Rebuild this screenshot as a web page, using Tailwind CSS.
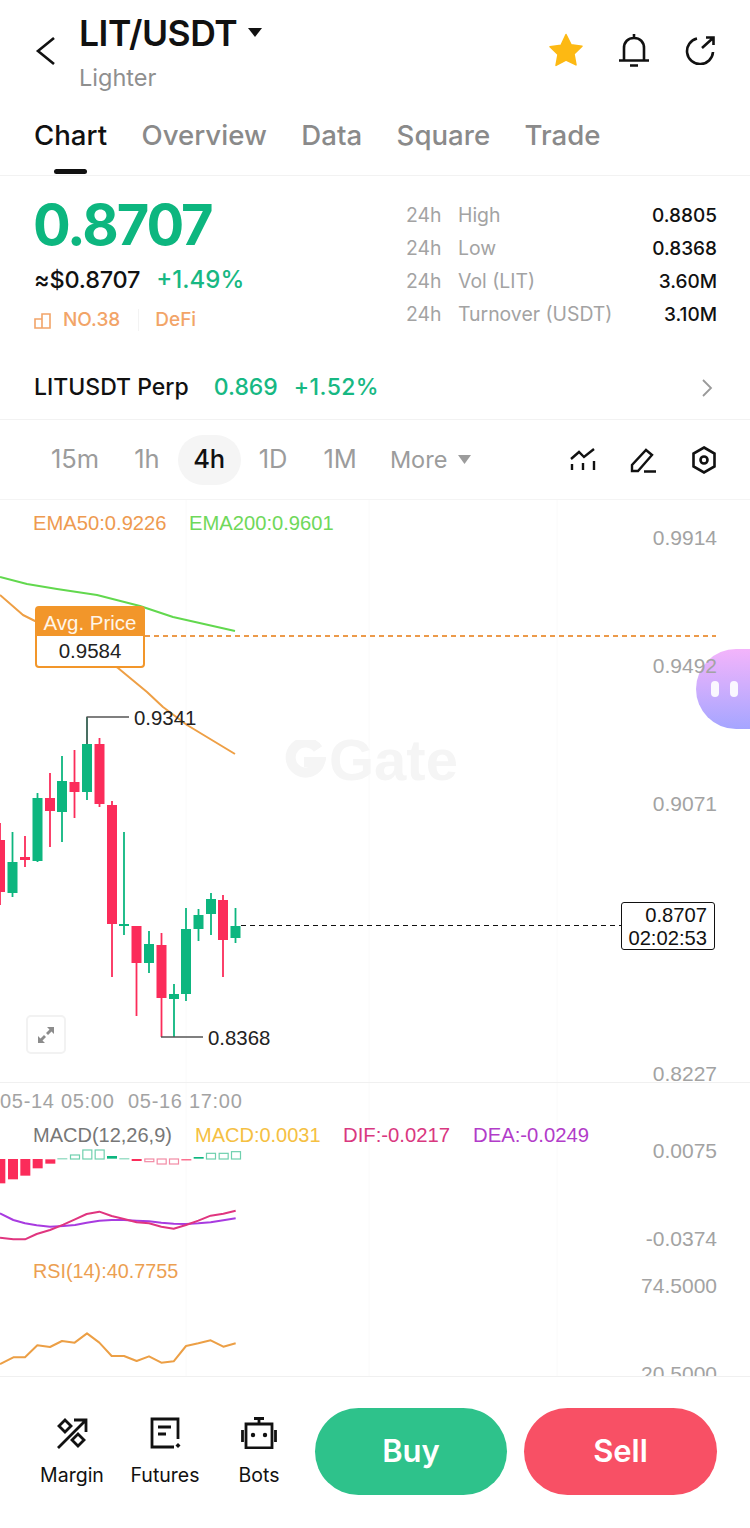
<!DOCTYPE html>
<html lang="en">
<head>
    <meta charset="UTF-8">
    <meta name="viewport" content="width=device-width, initial-scale=1.0">
    <title>LIT/USDT - Gate</title>
    <script src="https://cdn.jsdelivr.net/npm/@tailwindcss/browser@4"></script>
</head>
<body class="bg-white font-['Inter','Liberation_Sans',sans-serif] text-[#111]">
    <div class="w-[750px] h-[1528px] overflow-hidden flex flex-col">
        <!-- Header -->
        <header class="h-[112px] pl-[34px] pr-[34px] flex items-start">
            <svg class="mt-[37px] w-[24px] h-[28px] shrink-0" viewBox="0 0 24 28" fill="none" stroke="#111" stroke-width="2.6"><path d="M20 1 L4 14 L20 27"/></svg>
            <div class="ml-[21px] mt-[14px]">
                <div class="flex items-center h-[40px]">
                    <span class="text-[35.5px] font-semibold leading-[40px] tracking-[-0.5px]">LIT/USDT</span>
                    <svg class="ml-[11px] mb-[3px] w-[14px] h-[9px]" viewBox="0 0 14 9"><path d="M0 0H14L7 9Z" fill="#111"/></svg>
                </div>
                <div class="text-[23.5px] leading-[28px] mt-[10px] text-[#8f8f8f]">Lighter</div>
            </div>
            <div class="ml-auto mt-[33px] flex items-center gap-[34px]">
                <svg class="w-[36px] h-[34px]" viewBox="0 0 36 34"><path d="M18 1.5l5 10.2 11 1.5-8 7.7 2 11L18 27l-10 5.4 2-11-8-7.7 11-1.5z" fill="#fdb913" stroke="#fdb913" stroke-width="1.5" stroke-linejoin="round"/></svg>
                <svg class="w-[32px] h-[34px]" viewBox="0 0 32 34" fill="none" stroke="#111" stroke-width="2.6"><path d="M16 1v4M6 27V15c0-6 4-10 10-10s10 4 10 10v12M1 27.500h30M12 32.500h8"/></svg>
                <svg class="w-[32px] h-[30px]" viewBox="0 0 32 30" fill="none" stroke="#111" stroke-width="2.6"><path d="M13 3.500A13 13 0 1 0 29 17M18 13L29 3M22 2.500h7.500V10"/></svg>
            </div>
        </header>

        <!-- Tabs -->
        <nav class="h-[64px] pl-[34px] flex gap-[34.5px] border-b border-[#f2f2f2] relative">
            <a class="text-[27.6px] font-medium leading-[46px] text-[#111]">Chart</a>
            <a class="text-[27.6px] font-medium leading-[46px] text-[#8a8a8a]">Overview</a>
            <a class="text-[27.6px] font-medium leading-[46px] text-[#8a8a8a]">Data</a>
            <a class="text-[27.6px] font-medium leading-[46px] text-[#8a8a8a]">Square</a>
            <a class="text-[27.6px] font-medium leading-[46px] text-[#8a8a8a]">Trade</a>
            <span class="absolute left-[54px] top-[57px] w-[33px] h-[5px] rounded-full bg-[#111]"></span>
        </nav>

        <!-- Price block -->
        <section class="h-[168px] pl-[34px] pr-[33px] flex justify-between">
            <div>
                <div class="text-[56px] font-bold leading-[60px] mt-[19px] -ml-[1px] text-[#0db67f] tracking-[-2px]">0.8707</div>
                <div class="flex items-center mt-[9px] h-[32px]">
                    <span class="text-[23.5px] font-medium tracking-[-0.2px]">≈$0.8707</span>
                    <span class="text-[24px] ml-[16px] font-medium text-[#17b883]">+1.49%</span>
                </div>
                <div class="flex items-center h-[24px] mt-[12px] text-[19px] font-medium text-[#f2a468]">
                    <svg class="w-[17px] h-[17px] mr-[12px]" viewBox="0 0 17 17" fill="none" stroke="#f2a468" stroke-width="1.600"><path d="M1 7h7v9H1zM8 2h8v14H8z"/></svg>
                    <span>NO.38</span>
                    <span class="w-px h-[22px] bg-[#f3f3f3] ml-[18px] mr-[16px]"></span>
                    <span>DeFi</span>
                </div>
            </div>
            <dl class="mt-[23px] w-[311px] text-[19.4px] leading-[33px]">
                <div class="flex"><span class="w-[52px] text-[#a3a3a3]">24h</span><span class="text-[#a3a3a3]">High</span><span class="ml-auto text-[19px] font-medium">0.8805</span></div>
                <div class="flex"><span class="w-[52px] text-[#a3a3a3]">24h</span><span class="text-[#a3a3a3]">Low</span><span class="ml-auto text-[19px] font-medium">0.8368</span></div>
                <div class="flex"><span class="w-[52px] text-[#a3a3a3]">24h</span><span class="text-[#a3a3a3]">Vol (LIT)</span><span class="ml-auto text-[19px] font-medium">3.60M</span></div>
                <div class="flex"><span class="w-[52px] text-[#a3a3a3]">24h</span><span class="text-[#a3a3a3]">Turnover (USDT)</span><span class="ml-auto text-[19px] font-medium">3.10M</span></div>
            </dl>
        </section>

        <!-- Perp row -->
        <section class="h-[76px] pl-[34px] pr-[37px] pt-[12px] flex items-center border-b border-[#f2f2f2] text-[23px] font-medium">
            <span>LITUSDT Perp</span>
            <span class="ml-[25px] text-[#17b883]">0.869</span>
            <span class="ml-[16px] text-[#17b883] tracking-[0.4px]">+1.52%</span>
            <svg class="ml-auto w-[12px] h-[18px]" viewBox="0 0 12 18" fill="none" stroke="#9a9a9a" stroke-width="1.800"><path d="M2 1l8 8-8 8"/></svg>
        </section>

        <!-- Timeframes -->
        <section class="h-[80px] shrink-0 pl-[51px] pr-[33px] flex items-center border-b border-[#f4f4f4] text-[25.5px] text-[#9c9c9c]">
            <span>15m</span>
            <span class="ml-[35px]">1h</span>
            <span class="ml-[18px] w-[63px] h-[50px] rounded-full bg-[#f5f5f5] flex items-center justify-center font-medium text-[#111]">4h</span>
            <span class="ml-[18px]">1D</span>
            <span class="ml-[36px]">1M</span>
            <span class="ml-[33px] text-[23.5px]">More</span>
            <svg class="ml-[11px] w-[13px] h-[9px]" viewBox="0 0 13 9"><path d="M0 0H13L6.500 9Z" fill="#9c9c9c"/></svg>
            <svg class="ml-auto w-[26px] h-[24px]" viewBox="0 0 26 24" fill="none" stroke="#111" stroke-width="2.400"><path d="M1 11l8-7 5 5 10-8M2 16v6M13 15v7M24 13v9"/></svg>
            <svg class="ml-[34px] w-[27px] h-[26px]" viewBox="0 0 27 26" fill="none" stroke="#111" stroke-width="2.400"><path d="M2 24v-6L16 3l6 5L8 24zM14 24.500h12"/></svg>
            <svg class="ml-[34px] w-[26px] h-[28px]" viewBox="0 0 26 28" fill="none" stroke="#111" stroke-width="2.600"><path d="M13 1.500l10.500 6v13L13 26.500 2.500 20.500v-13z"/><circle cx="13" cy="14" r="3.500"/></svg>
        </section>

        <!-- Chart canvas: 500 to 1376 in page coordinates -->
        <section class="relative h-[877px] shrink-0 border-b border-[#f0f0f0] overflow-hidden font-['Liberation_Sans',sans-serif] text-[20px] leading-[24px]">
            <svg id="chart" class="absolute left-0 top-0 w-[750px] h-[877px]" viewBox="0 500 750 877" fill="none"></svg>

            <!-- Watermark -->
            <svg class="absolute left-[284px] top-[240px] w-[42px] h-[40px]" viewBox="0 0 42 40" fill="none" stroke="#f5f5f5" stroke-width="10"><path d="M34 9A15 15 0 1 0 36 22H20"/></svg>
            <span class="absolute left-[329px] top-[230px] text-[58px] leading-[60px] font-bold text-[#f5f5f5]">Gate</span>

            <span class="absolute left-[33px] top-[11px] text-[20.2px] text-[#ee9a50]">EMA50:0.9226</span>
            <span class="absolute left-[189px] top-[11px] text-[20.2px] text-[#6fd85a]">EMA200:0.9601</span>

            <!-- Avg price tag -->
            <div class="absolute left-[35px] top-[106px] w-[110px] h-[62px] rounded-[4px] border-2 border-[#f2962a] bg-white text-center text-[20.5px]">
                <div class="h-[28px] bg-[#f2962a] text-[#fff5e8] leading-[30px]">Avg. Price</div>
                <div class="leading-[30px] text-[#222]">0.9584</div>
            </div>

            <span class="absolute left-[134px] top-[206px] text-[20.4px] text-[#222]">0.9341</span>
            <span class="absolute left-[208px] top-[526px] text-[20.4px] text-[#222]">0.8368</span>

            <!-- Current price tag -->
            <div class="absolute left-[621px] top-[402px] w-[94px] h-[48px] border border-[#111] rounded-[3px] bg-white text-right pr-[7px] text-[20.2px] leading-[23px] text-[#111] pt-[1px]">0.8707<br>02:02:53</div>

            <!-- Expand button -->
            <div class="absolute left-[26px] top-[515px] w-[40px] h-[39px] border-2 border-[#f2f2f2] rounded-[5px] flex items-center justify-center">
                <svg class="w-[20px] h-[20px]" viewBox="0 0 20 20" fill="#8c8c8c"><path d="M11 2h7v7l-2.500-2.500-3.500 3.500-2-2 3.500-3.500zM9 18H2v-7l2.500 2.500L8 10l2 2-3.500 3.500z"/></svg>
            </div>

            <!-- Floating assistant -->
            <div class="absolute left-[696px] top-[149px] w-[60px] h-[80px] rounded-l-[40px] bg-gradient-to-b from-[#f3b4fb] to-[#a5a5ff] flex items-center gap-[11px] pl-[15px]">
                <span class="w-[8px] h-[16px] rounded-full bg-white/90"></span>
                <span class="w-[8px] h-[16px] rounded-full bg-white/90"></span>
            </div>

            <!-- Right axis -->
            <span class="absolute right-[33px] top-[26px] text-[21px] text-[#a3a3a3]">0.9914</span>
            <span class="absolute right-[33px] top-[154px] text-[21px] text-[#a3a3a3]">0.9492</span>
            <span class="absolute right-[33px] top-[292px] text-[21px] text-[#a3a3a3]">0.9071</span>
            <span class="absolute right-[33px] top-[562px] text-[21px] text-[#a3a3a3]">0.8227</span>
            <span class="absolute right-[33px] top-[639px] text-[21px] text-[#a3a3a3]">0.0075</span>
            <span class="absolute right-[33px] top-[727px] text-[21px] text-[#a3a3a3]">-0.0374</span>
            <span class="absolute right-[33px] top-[774px] text-[21px] text-[#a3a3a3]">74.5000</span>
            <span class="absolute right-[33px] top-[862px] text-[21px] text-[#a3a3a3]">20.5000</span>

            <!-- Time axis -->
            <span class="absolute left-0 top-[589px] tracking-[0.7px] text-[#a3a3a3]">05-14 05:00</span>
            <span class="absolute left-[128px] top-[589px] tracking-[0.7px] text-[#a3a3a3]">05-16 17:00</span>

            <!-- Indicator legends -->
            <span class="absolute left-[33px] top-[623px] text-[#777]">MACD(12,26,9)</span>
            <span class="absolute left-[195px] top-[623px] text-[#f5c042]">MACD:0.0031</span>
            <span class="absolute left-[343px] top-[623px] text-[20.3px] text-[#d9387f]">DIF:-0.0217</span>
            <span class="absolute left-[473px] top-[623px] text-[20.3px] text-[#b23cc9]">DEA:-0.0249</span>
            <span class="absolute left-[33px] top-[759px] text-[19.8px] text-[#ec9f52]">RSI(14):40.7755</span>
        </section>

        <!-- Bottom bar -->
        <footer class="flex-1 relative pl-[315px] pr-[33px] pt-[31px] flex gap-[17px]">
            <div class="absolute left-[36px] top-[40px] w-[72px] flex flex-col items-center text-[19.5px]">
                <svg class="w-[32px] h-[32px]" viewBox="0 0 32 32" fill="none" stroke="#111" stroke-width="2.800"><path d="M2 31L30 3M18 3h12v12"/><path d="M9 3l6 6-6 6-6-6zM22 17l6 6-6 6-6-6z"/></svg>
                <span class="mt-[13px] leading-[26px]">Margin</span>
            </div>
            <div class="absolute left-[129px] top-[40px] w-[72px] flex flex-col items-center text-[19.5px]">
                <svg class="w-[32px] h-[32px]" viewBox="0 0 32 32" fill="none" stroke="#111" stroke-width="2.800"><path d="M29 22V2H3v28h22M9 10h13M9 17h8"/><path d="M29 26l2.500 2.500L29 31l-2.500-2.500z" fill="#111" stroke="none"/></svg>
                <span class="mt-[13px] leading-[26px]">Futures</span>
            </div>
            <div class="absolute left-[223px] top-[40px] w-[72px] flex flex-col items-center text-[19.5px]">
                <svg class="w-[36px] h-[32px]" viewBox="0 0 36 32" fill="none" stroke="#111" stroke-width="2.800"><path d="M13 1.500h10M18 1.500v5M5 7h26v24H5zM1.500 13v12M34.500 13v12"/><circle cx="12" cy="18" r="2.200" fill="#111" stroke="none"/><circle cx="24" cy="18" r="2.200" fill="#111" stroke="none"/></svg>
                <span class="mt-[13px] leading-[26px]">Bots</span>
            </div>
            <button class="w-[192px] h-[87px] rounded-full bg-[#2ec28b] text-white text-[31px] font-semibold">Buy</button>
            <button class="w-[193px] h-[87px] rounded-full bg-[#f85065] text-white text-[31px] font-semibold">Sell</button>
        </footer>
    </div>

    <script>
        const GREEN = '#0db67f';
        const RED = '#fb2c5a';
        const chart = document.getElementById('chart');
        let out = '';

        function line(points, color, width) {
            out += `<polyline points="${points.join(' ')}" stroke="${color}" stroke-width="${width}" stroke-linejoin="round"/>`;
        }

        // points read off the picture in 3x crop units
        function scaled(list, offset) {
            return list.map(p => `${p[0] / 3},${offset + p[1] / 3}`);
        }

        // grid
        [186, 369, 557].forEach(x => {
            out += `<line x1="${x}" y1="500" x2="${x}" y2="1376" stroke="#fafafa"/>`;
        });
        out += `<line x1="0" y1="1082.500" x2="750" y2="1082.500" stroke="#f0f0f0"/>`;

        // x, wick top, wick bottom, body top, body bottom, up
        const candles = [
            [0, 823, 905, 840, 892, 0], [12.500, 832, 897, 862, 893, 1], [25, 836, 867, 857, 860, 0],
            [37.500, 793, 862, 798, 861, 1], [50, 773, 847, 798, 811, 0], [62, 756, 842, 781, 812, 1],
            [74.500, 750, 818, 782, 792, 0], [87, 717, 800, 744, 792, 1], [99.500, 738, 807, 744, 804, 0],
            [112, 801, 977, 805, 924, 0], [124, 832, 935, 924, 926, 1], [136.500, 926, 1016, 926, 963, 0],
            [149, 931, 973, 944, 963, 1], [161.500, 933, 1037, 945, 998, 0], [174, 984, 1037, 994, 999, 1],
            [186, 908, 1001, 929, 994, 1], [198.500, 909, 941, 915, 929, 1], [211, 893, 935, 899, 914, 1],
            [223, 895, 977, 900, 940, 0], [235.500, 908, 943, 926, 938, 1]
        ];
        candles.forEach(c => {
            const color = c[5] ? GREEN : RED;
            out += `<line x1="${c[0]}" y1="${c[1]}" x2="${c[0]}" y2="${c[2]}" stroke="${color}" stroke-width="1.800"/>`;
            out += `<rect x="${c[0] - 5}" y="${c[3]}" width="10" height="${c[4] - c[3]}" fill="${color}"/>`;
        });

        // EMA lines
        line([[0,577],[27,584],[57,589],[97,595],[140,606],[173,617],[235,631]].map(p => p.join(',')), '#62d84e', 2);
        line([[0,595],[23,615],[35,621],[118,668],[147,692],[163,707],[187,725],[235,754]].map(p => p.join(',')), '#ee9f45', 2);

        // dashed levels
        out += `<line x1="145" y1="636" x2="716" y2="636" stroke="#ec9a4a" stroke-width="2" stroke-dasharray="5 4"/>`;
        out += `<line x1="241" y1="925.500" x2="621" y2="925.500" stroke="#111" stroke-width="1" stroke-dasharray="5 4"/>`;

        // high / low leaders
        line(['87,744', '87,717', '129,717'], '#555', 1.500);
        line(['161,1037', '203,1037'], '#555', 1.500);

        // MACD bars: center x in crop units, top, bottom, kind
        const bars = [
            [0,297,370,'r'],[38,297,358,'r'],[75,297,347,'r'],[112,297,325,'r'],[150,298,311,'r'],
            [186,295,296,'gl'],[224,285,297,'go'],[261,270,297,'go'],[298,270,297,'go'],[335,288,296,'g'],
            [372,295,296,'gl'],[409,297,303,'r'],[447,297,305,'ro'],[484,297,312,'ro'],[521,297,312,'ro'],
            [558,298,299,'r'],[595,291,296,'g'],[632,280,297,'go'],[670,280,297,'go'],[707,275,297,'go']
        ];
        bars.forEach(b => {
            const x = (b[0] - 14) / 3;
            const y = 1060 + b[1] / 3;
            const h = Math.max((b[2] - b[1]) / 3, 1);
            if (b[3] === 'go' || b[3] === 'ro') {
                const stroke = b[3] === 'go' ? '#6fd0ae' : '#f28ba5';
                out += `<rect x="${x + 0.5}" y="${y}" width="9" height="${h}" stroke="${stroke}" stroke-width="1.200"/>`;
            } else {
                const fill = b[3] === 'r' ? RED : (b[3] === 'g' ? GREEN : '#6fd0ae');
                out += `<rect x="${x}" y="${y}" width="10" height="${h}" fill="${fill}"/>`;
            }
        });

        // DEA, DIF
        line(scaled([[0,460],[40,480],[75,490],[110,496],[150,500],[190,498],[225,495],[260,488],[298,482],[335,480],[372,480],[410,482],[447,484],[484,488],[521,491],[558,492],[595,490],[632,487],[670,481],[707,475]], 1060), '#a83be0', 2);
        line(scaled([[0,533],[40,538],[75,538],[110,522],[150,510],[190,494],[225,478],[260,462],[298,455],[335,468],[372,477],[410,487],[447,490],[484,500],[521,506],[558,495],[595,482],[632,467],[670,461],[707,452]], 1060), '#e0357f', 2);

        // RSI
        line(scaled([[0,912],[40,892],[75,892],[112,856],[150,861],[186,843],[224,848],[261,820],[298,848],[335,888],[372,888],[410,903],[447,889],[484,908],[521,904],[558,858],[595,850],[632,841],[670,860],[707,850]], 1060), '#ec9f45', 2);

        chart.innerHTML = out;
    </script>
</body>
</html>
